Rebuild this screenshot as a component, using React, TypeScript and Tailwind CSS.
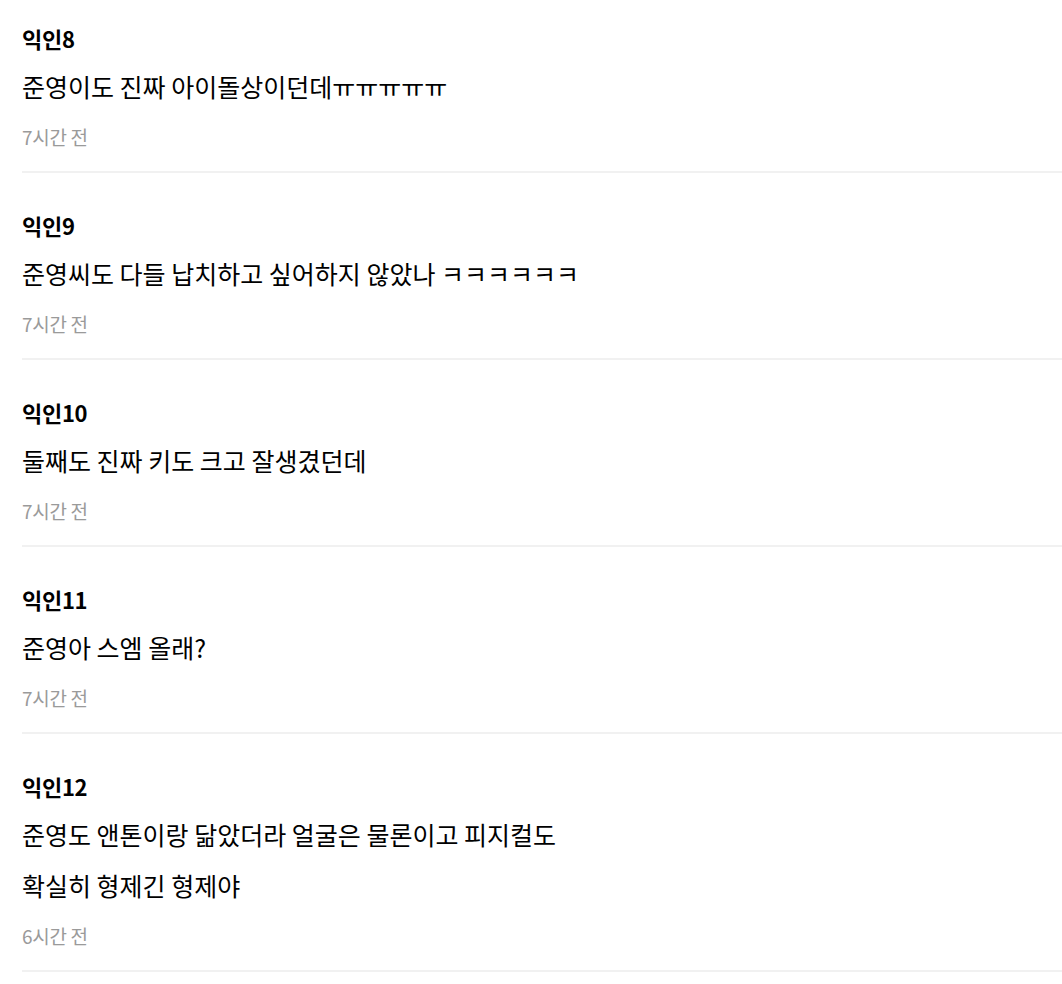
const comments = [
  { name: "익인8", lines: ["준영이도 진짜 아이돌상이던데ㅠㅠㅠㅠㅠ"], time: "7시간 전" },
  { name: "익인9", lines: ["준영씨도 다들 납치하고 싶어하지 않았나 ㅋㅋㅋㅋㅋㅋ"], time: "7시간 전" },
  { name: "익인10", lines: ["둘째도 진짜 키도 크고 잘생겼던데"], time: "7시간 전" },
  { name: "익인11", lines: ["준영아 스엠 올래?"], time: "7시간 전" },
  {
    name: "익인12",
    lines: ["준영도 앤톤이랑 닮았더라 얼굴은 물론이고 피지컬도", "확실히 형제긴 형제야"],
    time: "6시간 전",
  },
];

export default function App() {
  return (
    <div
      className="min-h-screen bg-white pl-[22px] text-black"
      style={{ fontFamily: '"Noto Sans CJK KR", "Noto Sans", sans-serif' }}
    >
      {comments.map((c) => (
        <div key={c.name} className="border-b-2 border-[#f1f1f1] pt-[38px] pb-[22px] first:pt-[24px]">
          <div className="text-[22px] leading-[28px] font-bold tracking-[-0.3px]">{c.name}</div>
          <div className="mt-[9px]">
            {c.lines.map((l) => (
              <p key={l} className="text-[25px] leading-[51px]">
                {l}
              </p>
            ))}
          </div>
          <div className="mt-[13px] text-[19px] leading-[24px] tracking-[-0.3px] text-[#9a9a9a]">{c.time}</div>
        </div>
      ))}
    </div>
  );
}
